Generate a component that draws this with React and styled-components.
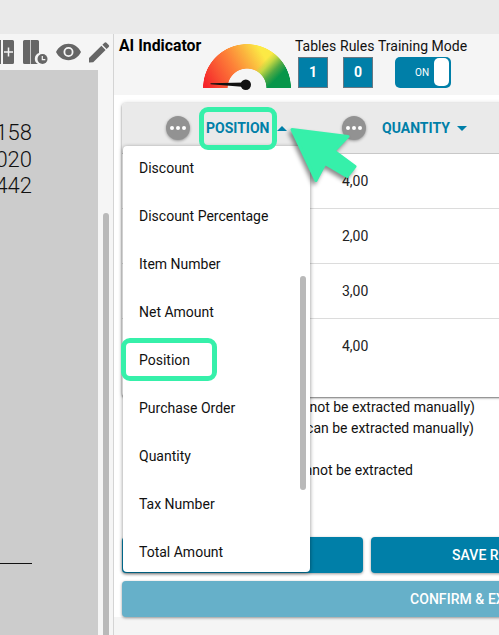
import React from "react";
import styled, { createGlobalStyle } from "styled-components";

const Global = createGlobalStyle`
  * { box-sizing: border-box; }
  body { margin: 0; overflow: hidden; font-family: Roboto, sans-serif; font-size: 14px; color: #111; }
`;

const Page = styled.div`
  width: 499px;
  height: 635px;
  overflow: hidden;
  display: flex;
  flex-direction: column;
  background: #f5f5f5;
`;
const TopBar = styled.div`
  height: 34px;
  flex: none;
  background: #eaeaea;
`;
const Main = styled.div`
  display: flex;
  flex: 1;
  min-height: 0;
`;
const Viewer = styled.aside`
  width: 114px;
  flex: none;
  border-right: 1px solid #d4d4d4;
  display: flex;
  flex-direction: column;
`;
const Toolbar = styled.div`
  height: 36px;
  flex: none;
  svg { display: block; }
`;
const ViewerBody = styled.div`
  flex: 1;
  display: flex;
`;
const DocPage = styled.div`
  width: 98px;
  background: #ccc;
  overflow: hidden;
`;
const DocNumbers = styled.div`
  width: 32px;
  margin-top: 50px;
  display: flex;
  flex-direction: column;
  align-items: flex-end;
  font: 300 22px/26.5px Roboto, sans-serif;
  color: #111;
`;
const DocRule = styled.div`
  width: 32px;
  height: 1px;
  margin-top: 363.5px;
  background: #111;
`;
const ViewerScroll = styled.div`
  width: 6px;
  margin: 143px 0 0 5px;
  border-radius: 3px 3px 0 0;
  background: #b9b9b9;
`;

const Panel = styled.main`
  flex: 1;
  min-width: 0;
  display: flex;
  flex-direction: column;
  overflow: hidden;
`;
const PanelHeader = styled.header`
  height: 61px;
  flex: none;
  display: flex;
  padding-left: 5px;
  white-space: nowrap;
`;
const IndicatorTitle = styled.div`
  width: 84px;
  font-size: 15.8px;
  line-height: 18px;
  margin-top: 3px;
  font-weight: 700;
  color: #000;
`;
const Gauge = styled.div`
  width: 88px;
  height: 48px;
  margin-top: 10px;
  position: relative;
`;
const GaugeArc = styled.div`
  width: 88px;
  height: 44px;
  background:
    linear-gradient(135deg, rgba(252, 233, 69, 0) 59%, #c6d943 65%, #4fa944 74%, #07964a 82%),
    linear-gradient(60deg, #f5242a 4%, #f95232 20%, #fd8138 38%, #fbb33e 54%, #fce945 70%);
  mask: radial-gradient(circle at 50% 100%, transparent 19px, #000 19.7px, #000 43.6px, transparent 44.2px);
`;
const Needle = styled.svg`
  position: absolute;
  left: 0;
  top: 0;
`;
const Stat = styled.div`
  margin-left: ${(p) => p.$gap}px;
  width: ${(p) => p.$width}px;
  padding-top: 4px;
  font-size: 14px;
  line-height: 16px;
  color: #111;
`;
const StatBox = styled.div`
  width: 30px;
  height: 31px;
  margin: 3px 0 0 3px;
  border: 1px solid #687883;
  background: #007fa8;
  color: #fff;
  font-weight: 700;
  line-height: 28px;
  text-align: center;
`;
const Toggle = styled.div`
  width: 56px;
  height: 31px;
  margin: 3px 0 0 17px;
  padding: 0 2px 1px 20px;
  border-radius: 5px;
  background: #007fa8;
  color: #fff;
  display: flex;
  justify-content: space-between;
  align-items: center;
  font-size: 10px;
  span { padding-top: 2px; }
`;
const Knob = styled.i`
  width: 15px;
  height: 28px;
  border-radius: 5px;
  background: #fff;
`;

const Content = styled.section`
  height: 522px;
  flex: none;
  padding: 8px 0 0 8px;
  background: #fff;
  display: flex;
  flex-direction: column;
`;
const Table = styled.div`
  width: 430px;
  height: 294px;
  flex: none;
  border-radius: 4px;
  position: relative;
  background: #fff;
  box-shadow: 0 1px 2px rgba(0, 0, 0, 0.5), 0 0 4px rgba(0, 0, 0, 0.16);
`;
const TableHead = styled.div`
  height: 51px;
  display: flex;
  align-items: center;
  border-bottom: 1px solid #c8c8c8;
  border-radius: 4px 4px 0 0;
  background: #eaeaea;
`;
const HeadCell = styled.div`
  width: ${(p) => p.$width}px;
  padding-left: 44px;
  display: flex;
  align-items: center;
  flex: none;
`;
const More = styled.div`
  width: 24px;
  height: 24px;
  border-radius: 50%;
  background: #929292;
  box-shadow: 0 1px 3px rgba(0, 0, 0, 0.35);
  display: flex;
  align-items: center;
  justify-content: center;
  gap: 2px;
  i { width: 4px; height: 4px; border-radius: 50%; background: #fff; }
`;
const ColumnName = styled.span`
  margin-left: 16px;
  color: #007fa8;
  font-weight: 700;
`;
const Caret = styled.span`
  margin-left: 7px;
  border: 5px solid transparent;
  border-width: ${(p) => (p.$up ? "0 5px 5px" : "5px 5px 0")};
  border-color: ${(p) => (p.$up ? "transparent transparent #007fa8" : "#007fa8 transparent transparent")};
`;
const Row = styled.div`
  height: 55px;
  padding-left: 220px;
  display: flex;
  align-items: center;
  border-bottom: ${(p) => (p.$last ? "none" : "1px solid #dcdcdc")};
  padding-bottom: ${(p) => (p.$last ? 1 : 0)}px;
  font-size: 14px;
  color: #222;
`;
const ColumnSelect = styled.div`
  position: relative;
`;
const Menu = styled.div`
  position: absolute;
  z-index: 2;
  left: 1px;
  top: 43px;
  width: 187px;
  height: 426px;
  overflow: hidden;
  display: flex;
  border-radius: 4px;
  background: #fff;
  box-shadow: 0 1px 4px rgba(0, 0, 0, 0.45);
`;
const Options = styled.div`
  flex: 1;
  margin-top: -2px;
`;
const Option = styled.div`
  height: 48px;
  padding-left: 16px;
  display: flex;
  align-items: center;
  color: #111;
`;
const MenuThumb = styled.div`
  width: 6px;
  height: 214px;
  margin: 130px 4px 0 0;
  border-radius: 3px;
  background: #b9b9b9;
`;
const Ring = styled.div`
  position: absolute;
  z-index: 3;
  left: ${(p) => p.$x}px;
  top: ${(p) => p.$y}px;
  width: ${(p) => p.$w}px;
  height: 43px;
  border: 5px solid #36f0aa;
  border-radius: 9px;
`;
const Pointer = styled.svg`
  position: absolute;
  z-index: 4;
  left: 158px;
  top: 15px;
  filter: drop-shadow(-2px 3px 2px rgba(0, 0, 0, 0.45));
`;
const Notes = styled.div`
  height: 140px;
  flex: none;
`;
const Note = styled.div`
  width: ${(p) => p.$end}px;
  height: 21px;
  line-height: 20px;
  text-align: right;
  white-space: nowrap;
  color: #111;
`;
const Buttons = styled.div`
  display: flex;
  gap: 8px;
  margin-bottom: 8px;
`;
const Button = styled.button`
  flex: none;
  width: ${(p) => p.$width}px;
  height: 36px;
  border: 0;
  border-radius: 4px;
  background: ${(p) => (p.$muted ? "#66b0c9" : "#007fa8")};
  color: #fff;
  font: 500 14px Roboto, sans-serif;
  letter-spacing: 0.05px;
  text-align: left;
  padding: 0 0 0 ${(p) => p.$inset}px;
  white-space: nowrap;
  box-shadow: 0 1px 3px rgba(0, 0, 0, 0.4);
`;

const OPTIONS = [
  "Discount", "Discount Percentage", "Item Number", "Net Amount", "Position",
  "Purchase Order", "Quantity", "Tax Number", "Total Amount",
];
const VALUES = ["4,00", "2,00", "3,00", "4,00"];

const ToolIcons = () => (
  <svg width="113" height="36" viewBox="0 34 113 36" fill="#666">
    <path d="M0 40h1v24H0zM3 40h9.500q1.500 0 1.500 1.500v21q0 1.500-1.500 1.500H3z" />
    <path d="M8.500 47.500v9M4 52h9" stroke="#f5f5f5" strokeWidth="1.500" />
    <path d="M24.500 40h5.500v24h-5.500q-1.500 0-1.500-1.500v-21q0-1.500 1.500-1.500zM30.700 40h6.800q1.500 0 1.500 1.500v11.500a6 6 0 0 0-1 11H30.700z" />
    <circle cx="42.500" cy="59" r="5" />
    <path d="M42.300 56v3.600h3" fill="none" stroke="#f5f5f5" strokeWidth="1.200" />
    <path fillRule="evenodd" d="M56 52c2.500-5 7-8.200 12.500-8.200S78.500 47 81 52c-2.500 5-7 8.200-12.500 8.200S58.500 57 56 52zM73.500 52a5 5 0 1 0-10 0a5 5 0 1 0 10 0z" />
    <circle cx="68.500" cy="52" r="3.200" />
    <path d="M89 58l12.400-12.300 4.200 4.200L93.200 62.200 89 62.500zM102.400 44.800l2.100-2.100q1-1 2 0l2.200 2.200q1 1 0 2l-2.100 2.100z" />
  </svg>
);

const Dots = () => <More><i /><i /><i /></More>;

export default function App() {
  return (
    <Page>
      <Global />
      <TopBar />
      <Main>
        <Viewer>
          <Toolbar><ToolIcons /></Toolbar>
          <ViewerBody>
            <DocPage>
              <DocNumbers><span>158</span><span>020</span><span>442</span></DocNumbers>
              <DocRule />
            </DocPage>
            <ViewerScroll />
          </ViewerBody>
        </Viewer>
        <Panel>
          <PanelHeader>
            <IndicatorTitle>AI Indicator</IndicatorTitle>
            <Gauge>
              <GaugeArc />
              <Needle width="88" height="48" viewBox="0 0 88 48">
                <path d="M7.500 39.200L42 38.500v4.600L7.500 40.200z" fill="#111" />
                <circle cx="42.800" cy="40.700" r="5.200" fill="#111" />
              </Needle>
            </Gauge>
            <Stat $gap={4} $width={42}>Tables<StatBox>1</StatBox></Stat>
            <Stat $gap={3} $width={35}>Rules<StatBox>0</StatBox></Stat>
            <Stat $gap={3} $width={100}>Training Mode<Toggle><span>ON</span><Knob /></Toggle></Stat>
          </PanelHeader>
          <Content>
            <Table>
              <ColumnSelect>
                <Menu>
                  <Options>{OPTIONS.map((o) => <Option key={o}>{o}</Option>)}</Options>
                  <MenuThumb />
                </Menu>
                <Ring $x={77} $y={4} $w={78} />
                <Ring $x={-1} $y={235} $w={96} />
                <Pointer width="84" height="74" viewBox="280 118 84 74">
                  <path d="M292 129.500L348 136.500L334 151L355 166.500L347 176.500L325 163.500L316 180.500Z" fill="#36f0aa" stroke="#36f0aa" strokeWidth="3" strokeLinejoin="round" />
                </Pointer>
              </ColumnSelect>
              <TableHead>
                <HeadCell $width={176}><Dots /><ColumnName>POSITION</ColumnName><Caret $up /></HeadCell>
                <HeadCell $width={200}><Dots /><ColumnName>QUANTITY</ColumnName><Caret /></HeadCell>
              </TableHead>
              {VALUES.map((v, i) => <Row key={i} $last={i === 3}>{v}</Row>)}
            </Table>
            <Notes>
              <Note $end={353}>(cannot be extracted manually)</Note>
              <Note $end={352}>(can be extracted manually)</Note>
              <Note />
              <Note $end={291}>cannot be extracted</Note>
            </Notes>
            <Buttons>
              <Button $width={241} />
              <Button $width={241} $inset={81}>SAVE RULE</Button>
            </Buttons>
            <Buttons><Button $width={739} $inset={288} $muted>CONFIRM &amp; EXPORT</Button></Buttons>
          </Content>
        </Panel>
      </Main>
    </Page>
  );
}
